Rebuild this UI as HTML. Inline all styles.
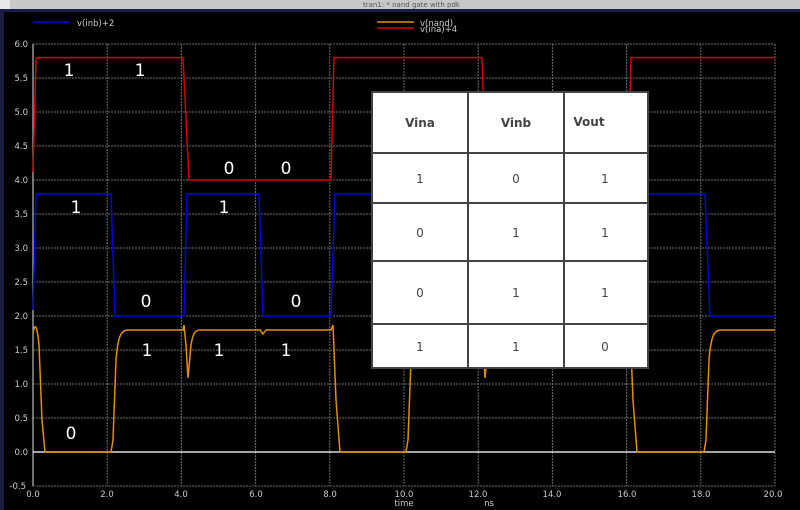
<!DOCTYPE html>
<html><head><meta charset="utf-8"><style>
html,body{margin:0;padding:0;background:#000;width:800px;height:510px;overflow:hidden}
svg{display:block}
text{font-family:"DejaVu Sans","Liberation Sans",sans-serif}
</style></head><body>
<svg width="800" height="510" viewBox="0 0 800 510" xmlns="http://www.w3.org/2000/svg">
<rect width="800" height="510" fill="#000"/>
<rect x="0" y="0" width="800" height="9" fill="#c8c8c8"/>
<rect x="0" y="0" width="10" height="9" fill="#e8e8e8"/>
<text x="363" y="7" font-size="7" fill="#555">tran1: * nand gate with pdk</text>
<rect x="0" y="9" width="800" height="3" fill="#1c1c48"/>
<rect x="0" y="9" width="4" height="501" fill="#1c1c48"/>
<!-- legend -->
<line x1="33" y1="22" x2="70" y2="22" stroke="#0000e0" stroke-width="1.5"/>
<text x="77" y="26" font-size="8.5" fill="#ccc">v(inb)+2</text>
<line x1="377" y1="22" x2="414" y2="22" stroke="#e09000" stroke-width="1.5"/>
<line x1="377" y1="28" x2="414" y2="28" stroke="#d00000" stroke-width="1.5"/>
<text x="420" y="26" font-size="8.5" fill="#ccc">v(nand)</text>
<text x="420" y="32" font-size="8.5" fill="#ccc">v(ina)+4</text>
<!-- grid -->
<g stroke="#888" stroke-width="1" stroke-dasharray="2,1" opacity="0.8">
<line x1="33" y1="44" x2="775" y2="44"/><line x1="33" y1="78" x2="775" y2="78"/>
<line x1="33" y1="112" x2="775" y2="112"/><line x1="33" y1="146" x2="775" y2="146"/>
<line x1="33" y1="180" x2="775" y2="180"/><line x1="33" y1="214" x2="775" y2="214"/>
<line x1="33" y1="248" x2="775" y2="248"/><line x1="33" y1="282" x2="775" y2="282"/>
<line x1="33" y1="316" x2="775" y2="316"/><line x1="33" y1="350" x2="775" y2="350"/>
<line x1="33" y1="384" x2="775" y2="384"/><line x1="33" y1="418" x2="775" y2="418"/>
<line x1="33" y1="486" x2="775" y2="486"/>
<line x1="107.2" y1="44" x2="107.2" y2="486"/><line x1="181.4" y1="44" x2="181.4" y2="486"/>
<line x1="255.6" y1="44" x2="255.6" y2="486"/><line x1="329.8" y1="44" x2="329.8" y2="486"/>
<line x1="404" y1="44" x2="404" y2="486"/><line x1="478.2" y1="44" x2="478.2" y2="486"/>
<line x1="552.4" y1="44" x2="552.4" y2="486"/><line x1="626.6" y1="44" x2="626.6" y2="486"/>
<line x1="700.8" y1="44" x2="700.8" y2="486"/><line x1="775" y1="44" x2="775" y2="486"/>
</g>
<line x1="33" y1="44" x2="33" y2="486" stroke="#bbb" stroke-width="1.2"/>
<line x1="33" y1="452" x2="775" y2="452" stroke="#ddd" stroke-width="1.5"/>
<g font-size="8.5" fill="#ccc" text-anchor="end">
<text x="28" y="47">6.0</text><text x="28" y="81">5.5</text><text x="28" y="115">5.0</text>
<text x="28" y="149">4.5</text><text x="28" y="183">4.0</text><text x="28" y="217">3.5</text>
<text x="28" y="251">3.0</text><text x="28" y="285">2.5</text><text x="28" y="319">2.0</text>
<text x="28" y="353">1.5</text><text x="28" y="387">1.0</text><text x="28" y="421">0.5</text>
<text x="28" y="455">0.0</text><text x="26" y="489">-0.5</text>
</g>
<g font-size="8.5" fill="#ccc" text-anchor="middle">
<text x="33" y="497">0.0</text><text x="107" y="497">2.0</text><text x="181" y="497">4.0</text>
<text x="256" y="497">6.0</text><text x="330" y="497">8.0</text><text x="404" y="497">10.0</text>
<text x="478" y="497">12.0</text><text x="552" y="497">14.0</text><text x="627" y="497">16.0</text>
<text x="701" y="497">18.0</text><text x="773" y="497">20.0</text>
<text x="404" y="506">time</text><text x="489" y="506">ns</text>
</g>
<!-- red -->
<path d="M33,172 L36,60 L37,57.6 L183,57.6 L189,180 L331,180 L334,57.6 L482,57.6 L486,180 L628,180 L631,57.6 L775,57.6" fill="none" stroke="#d00000" stroke-width="1.5"/>
<!-- blue -->
<path d="M33,310 L36,194 L111,194 L115,316 L184,316 L187,194 L259,194 L263,316 L331,316 L335,194 L406,194 L411,316 L480,316 L484,194 L554,194 L559,316 L628,316 L632,194 L705,194 L710,316 L775,316" fill="none" stroke="#0000e0" stroke-width="1.5"/>
<!-- orange -->
<path d="M33,333 C35,322 37,325 39,345 L42,420 L45,452 L111,452 L113,440 L116,360 C118,336 121,330 128,330 L183,330 L184,325 L186,345 L188,378 L191,345 C193,333 195,330 200,330 L260,330 L263,334 L266,330 L331,330 L333,325 L336,400 L340,452 L406,452 L408,440 L411,360 C413,336 416,330 423,330 L480,330 L481,325 L483,345 L485,378 L488,345 C490,333 492,330 497,330 L556,330 L559,334 L562,330 L628,330 L630,325 L633,400 L637,452 L704,452 L706,440 L709,360 C711,336 714,330 721,330 L775,330" fill="none" stroke="#e09000" stroke-width="1.5"/>
<!-- labels -->
<g font-size="17" fill="#fff" text-anchor="middle" font-family="Liberation Sans, sans-serif">
<text x="69" y="76">1</text><text x="140" y="76">1</text>
<text x="229" y="174">0</text><text x="286" y="174">0</text>
<text x="76" y="213">1</text><text x="224" y="213">1</text>
<text x="146" y="307">0</text><text x="296" y="307">0</text>
<text x="147" y="356">1</text><text x="219" y="356">1</text><text x="286" y="356">1</text>
<text x="71" y="439">0</text>
</g>
<!-- table -->
<g>
<rect x="372" y="92" width="276" height="276" fill="#fff" stroke="#444" stroke-width="2"/>
<g stroke="#444" stroke-width="2">
<line x1="468" y1="92" x2="468" y2="368"/><line x1="564" y1="92" x2="564" y2="368"/>
<line x1="372" y1="153" x2="648" y2="153"/><line x1="372" y1="203" x2="648" y2="203"/>
<line x1="372" y1="261" x2="648" y2="261"/><line x1="372" y1="324" x2="648" y2="324"/>
</g>
<g font-family="Liberation Sans, sans-serif" font-size="12" fill="#444" text-anchor="middle">
<text x="420" y="127" font-weight="bold">Vina</text>
<text x="516" y="127" font-weight="bold">Vinb</text>
<text x="589" y="126" font-weight="bold">Vout</text>
<text x="420" y="183">1</text><text x="516" y="183">0</text><text x="605" y="183">1</text>
<text x="420" y="237">0</text><text x="516" y="237">1</text><text x="605" y="237">1</text>
<text x="420" y="297">0</text><text x="516" y="297">1</text><text x="605" y="297">1</text>
<text x="420" y="351">1</text><text x="516" y="351">1</text><text x="605" y="351">0</text>
</g>
</g>
</svg>
</body></html>
